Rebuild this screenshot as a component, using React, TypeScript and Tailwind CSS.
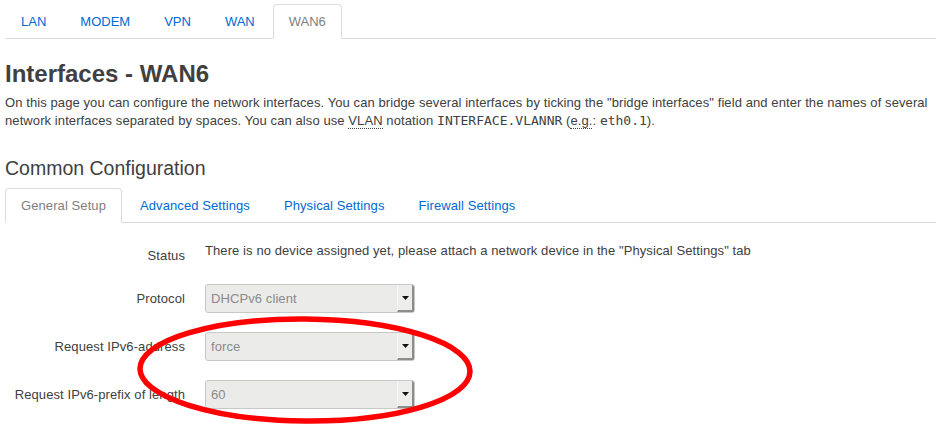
const topTabs = ["LAN", "MODEM", "VPN", "WAN", "WAN6"]
const sectionTabs = ["General Setup", "Advanced Settings", "Physical Settings", "Firewall Settings"]

interface TabBarProps {
    tabs: string[];
    active: string;
    spacing: string;
}

const TabBar = ({ tabs, active, spacing }: TabBarProps) => {
    return (
        <ul className={`flex border-b border-[#ddd] ${spacing}`}>
            {tabs.map((tab) => (
                <li key={tab} className="-mb-px mr-[2px]">
                    <div
                        className={
                            tab === active
                                ? "h-[35px] px-[15px] flex items-center border border-[#ddd] border-b-white bg-white rounded-t-[4px] text-[#808080]"
                                : "h-[35px] px-[15px] flex items-center border border-transparent text-[#0069d6]"
                        }
                    >
                        {tab}
                    </div>
                </li>
            ))}
        </ul>
    )
}

const Select = ({ value }: { value: string }) => {
    return (
        <div className="w-[210px] h-[29px] flex items-stretch bg-[#ebebea] border border-[#c8c8c8] rounded-[3px] overflow-hidden">
            <div className="flex-1 flex items-center pl-[5px] text-[#8a8a8a]">{value}</div>
            <div className="w-[17px] flex items-center justify-center bg-[#ededec] border-l border-[#f8f8f8] border-r-2 border-b-2 border-r-[#8c8c8c] border-b-[#8c8c8c]">
                <svg width="7" height="4" viewBox="0 0 7 4">
                    <path d="M0 0h7L3.5 4z" fill="#111" />
                </svg>
            </div>
        </div>
    )
}

const SelectRow = ({ label, value }: { label: string; value: string }) => {
    return (
        <div className="flex items-start mb-[19px]">
            <div className="w-[180px] pt-[6px] text-right leading-[18px]">{label}</div>
            <div className="ml-[20px]">
                <Select value={value} />
            </div>
        </div>
    )
}

const Abbr = ({ children }: { children: React.ReactNode }) => (
    <span className="border-b border-dotted border-[#404040]">{children}</span>
)

const Mono = ({ children }: { children: React.ReactNode }) => (
    <span className="font-['DejaVu_Sans_Mono',monospace] text-[13px] tracking-normal">{children}</span>
)

export default function App() {
    return (
        <div className="relative w-[936px] h-[428px] overflow-hidden bg-white font-['Liberation_Sans',Arial,sans-serif] text-[13px] leading-[18px] tracking-[0.09px] text-[#404040]">
            <div className="pl-[5px] pt-[4px]">
                <TabBar tabs={topTabs} active="WAN6" spacing="tracking-normal" />

                <h2 className="mt-[17px] text-[24px] leading-[36px] font-bold tracking-normal">Interfaces - WAN6</h2>
                <p className="mt-[2px] pr-[5px]">
                    On this page you can configure the network interfaces. You can bridge several interfaces by ticking the "bridge interfaces" field and enter the names of several network interfaces separated by spaces. You can also use <Abbr>VLAN</Abbr> notation <Mono>INTERFACE.VLANNR</Mono> (<Abbr>e.g.</Abbr>: <Mono>eth0.1</Mono>).
                </p>

                <h3 className="mt-[25px] mb-[6px] text-[19.5px] leading-[27px] tracking-normal">Common Configuration</h3>
                <TabBar tabs={sectionTabs} active="General Setup" spacing="tracking-[0.09px]" />

                <div className="pt-[19px]">
                    <div className="flex items-start mb-[19px]">
                        <div className="w-[180px] pt-[5px] text-right">Status</div>
                        <div className="ml-[20px]">
                            There is no device assigned yet, please attach a network device in the "Physical Settings" tab
                        </div>
                    </div>
                    <SelectRow label="Protocol" value="DHCPv6 client" />
                    <SelectRow label="Request IPv6-address" value="force" />
                    <SelectRow label="Request IPv6-prefix of length" value="60" />
                </div>
            </div>

            {/* red marker ring drawn over the two request rows */}
            <svg className="absolute left-0 top-0 pointer-events-none" width="936" height="428">
                <ellipse cx="305" cy="370" rx="165" ry="51" fill="none" stroke="#ff0000" strokeWidth="5.5" transform="rotate(0.5 305 370)" />
            </svg>
        </div>
    )
}
